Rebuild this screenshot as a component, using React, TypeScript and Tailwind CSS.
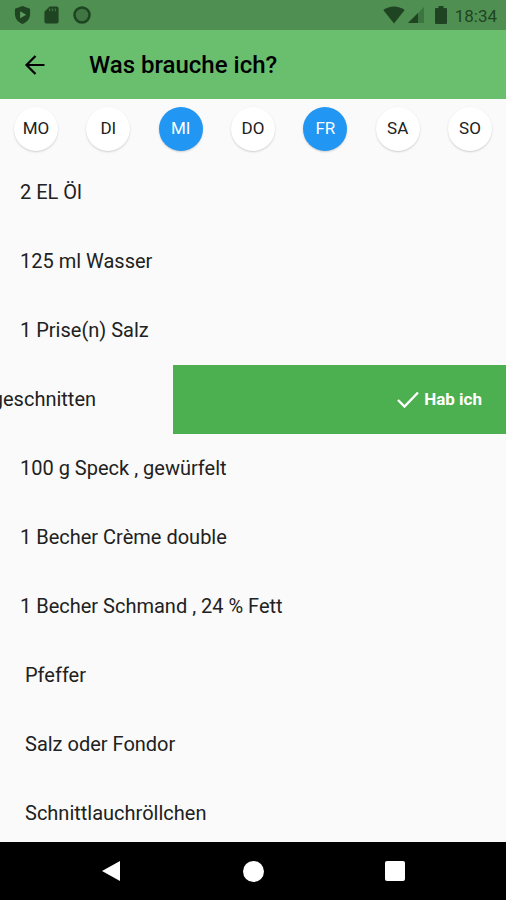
import { useState } from "react";

const days = ["MO", "DI", "MI", "DO", "FR", "SA", "SO"];

type Item = { text: string; amount: boolean; swiped?: boolean };

const items: Item[] = [
  { text: "2 EL Öl", amount: true },
  { text: "125 ml Wasser", amount: true },
  { text: "1 Prise(n) Salz", amount: true },
  { text: "geschnitten", amount: true, swiped: true },
  { text: "100 g Speck , gewürfelt", amount: true },
  { text: "1 Becher Crème double", amount: true },
  { text: "1 Becher Schmand , 24 % Fett", amount: true },
  { text: "Pfeffer", amount: false },
  { text: "Salz oder Fondor", amount: false },
  { text: "Schnittlauchröllchen", amount: false },
];

function StatusBar() {
  return (
    <div className="flex h-[30px] shrink-0 items-center justify-between bg-[#4f8f52] pr-[9px] pl-[14px] text-[#1f4421]">
      <div className="flex items-center gap-3">
        <svg width="17" height="20" viewBox="0 0 18 20" aria-hidden="true">
          <path d="M9 0.5 17 3.5V9c0 5-3.2 8.800-8 10.500C4.200 17.800 1 14 1 9V3.500Z" fill="currentColor" />
          <path d="M6.500 6 13 9.700 6.500 13.400Z" fill="#5b9a5d" />
        </svg>
        <svg width="17" height="20" viewBox="0 0 18 20" aria-hidden="true">
          <path d="M7 1h7.500a2 2 0 0 1 2 2v14a2 2 0 0 1-2 2h-11a2 2 0 0 1-2-2V6.500Z" fill="currentColor" />
          <path d="M7 3v3M10 3v3M13 3v3" stroke="#3f7642" strokeWidth="1.300" />
        </svg>
        <svg width="20" height="20" viewBox="0 0 20 20" aria-hidden="true">
          <circle cx="10" cy="10" r="7.500" fill="#3f7642" stroke="currentColor" strokeWidth="2.500" />
        </svg>
      </div>
      <div className="flex items-center">
        <svg width="22" height="18" viewBox="0 0 22 18" aria-hidden="true">
          <path d="M0.300 4C6.500-.8 15.500-.8 21.700 4L11 17.500Z" fill="currentColor" />
        </svg>
        <svg className="ml-0.5" width="18" height="18" viewBox="0 0 18 18" aria-hidden="true">
          <path d="M17 1v16H1Z" fill="#3d7540" />
          <path d="M11 7v10H1Z" fill="currentColor" />
        </svg>
        <svg className="ml-2.5" width="12" height="18" viewBox="0 0 12 18" aria-hidden="true">
          <path d="M3.500 0h5v2H11a1 1 0 0 1 1 1v14a1 1 0 0 1-1 1H1a1 1 0 0 1-1-1V3a1 1 0 0 1 1-1h2.500Z" fill="currentColor" />
        </svg>
        <time className="ml-2 pt-0.5 text-[17px] leading-5">18:34</time>
      </div>
    </div>
  );
}

function ItemRow({ item }: { item: Item }) {
  if (item.swiped) {
    return (
      <li className="flex h-[69px] shrink-0 items-stretch">
        <div className="flex w-[34.2%] items-center justify-end overflow-hidden pr-[77px] pb-0.5">
          <span>{item.text}</span>
        </div>
        <button
          type="button"
          className="flex flex-1 items-center justify-end gap-1 bg-[#4caf50] pr-6 text-[17px] font-bold text-white"
        >
          <svg width="24" height="24" viewBox="0 0 24 24" aria-hidden="true">
            <path d="M2 12 8.500 18.500 22 4.500" fill="none" stroke="currentColor" strokeWidth="2.400" />
          </svg>
          Hab ich
        </button>
      </li>
    );
  }
  return (
    <li className={`flex h-[69px] shrink-0 items-center pr-5 pb-0.5 ${item.amount ? "pl-5" : "pl-[25px]"}`}>
      {item.text}
    </li>
  );
}

export default function App() {
  const [selected, setSelected] = useState<string[]>(["MI", "FR"]);
  const toggle = (day: string) =>
    setSelected((s) => (s.includes(day) ? s.filter((d) => d !== day) : [...s, day]));

  return (
    <div className="flex h-screen flex-col bg-[#fafafa] font-[Roboto,sans-serif] text-[#212121]">
      <StatusBar />
      <header className="flex h-[69px] shrink-0 items-center bg-[#6abf6e] pl-5 text-black">
        <button type="button" aria-label="Zurück" className="flex size-[30px] items-center justify-center">
          <svg width="22" height="22" viewBox="0 0 22 22" fill="none" stroke="currentColor" strokeWidth="2.200" aria-hidden="true">
            <path d="M20.500 11H3M11.500 2 2.500 11l9 9" />
          </svg>
        </button>
        <h1 className="ml-[39px] text-2xl font-medium">Was brauche ich?</h1>
      </header>
      <div className="flex h-[59px] shrink-0 items-center justify-between px-[14px]">
        {days.map((day) => (
          <button
            key={day}
            type="button"
            aria-pressed={selected.includes(day)}
            onClick={() => toggle(day)}
            className={`flex size-11 items-center justify-center rounded-full text-[17px] shadow-[0_1px_2px_rgba(0,0,0,0.18)] ${
              selected.includes(day) ? "bg-[#2196f3] text-white" : "bg-white"
            }`}
          >
            {day}
          </button>
        ))}
      </div>
      <ul className="flex min-h-0 flex-1 flex-col overflow-hidden text-xl">
        {items.map((item) => (
          <ItemRow key={item.text} item={item} />
        ))}
      </ul>
      <nav className="grid h-[58px] shrink-0 grid-cols-3 bg-black px-10 text-white">
        <button type="button" aria-label="Zurück" className="flex items-center justify-center">
          <svg width="20" height="22" viewBox="0 0 20 22" aria-hidden="true">
            <path d="M19 1v20L1 11Z" fill="currentColor" />
          </svg>
        </button>
        <button type="button" aria-label="Startseite" className="flex items-center justify-center">
          <span className="size-[21px] rounded-full bg-white" />
        </button>
        <button type="button" aria-label="Übersicht" className="flex items-center justify-center">
          <span className="size-5 rounded-xs bg-white" />
        </button>
      </nav>
    </div>
  );
}
